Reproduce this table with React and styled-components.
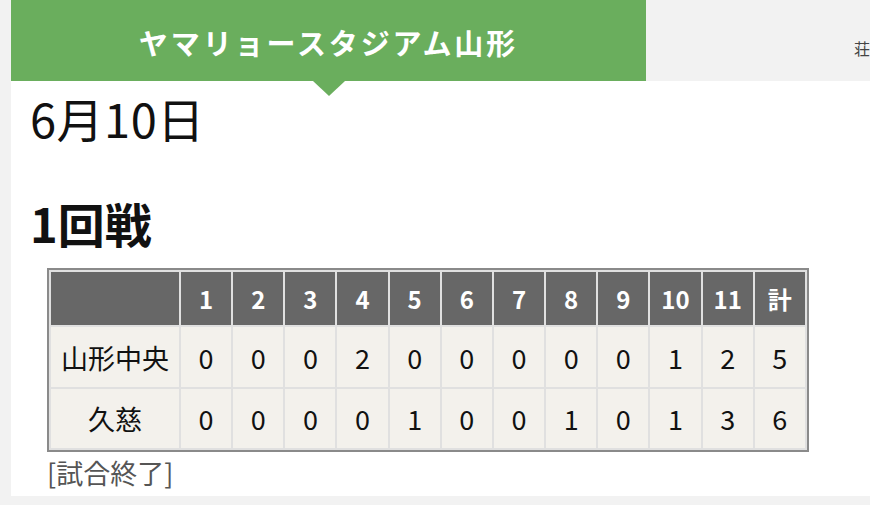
import React from 'react';
import styled, { createGlobalStyle } from 'styled-components';

const GlobalStyle = createGlobalStyle`
  html, body {
    margin: 0;
    padding: 0;
    background: #f2f2f2;
    overflow: hidden;
  }
  body {
    font-family: "Noto Sans CJK JP", "Noto Sans", sans-serif;
    color: #111;
  }
`;

const Page = styled.div`
  width: 1281px;
  padding-left: 11px;
`;

const TabBar = styled.div`
  display: flex;
  height: 81px;
`;

const Tab = styled.div`
  position: relative;
  flex: 0 0 635px;
  display: flex;
  align-items: center;
  justify-content: ${props => (props.active ? 'center' : 'flex-start')};
  padding-left: ${props => (props.active ? '0' : '208px')};
  background: ${props => (props.active ? '#6aae5d' : '#f2f2f2')};
  color: ${props => (props.active ? '#fff' : '#444')};
  font-size: ${props => (props.active ? '29px' : '16px')};
  font-weight: ${props => (props.active ? 700 : 400)};
  letter-spacing: ${props => (props.active ? '2.9px' : '1px')};
  padding-top: ${props => (props.active ? '2px' : '14px')};
  box-sizing: border-box;
  white-space: nowrap;

  ${props => props.active && `
    &:after {
      content: '';
      position: absolute;
      left: 50%;
      bottom: -15px;
      margin-left: -16px;
      border-left: 16px solid transparent;
      border-right: 16px solid transparent;
      border-top: 15px solid #6aae5d;
    }
  `}
`;

const Panel = styled.div`
  background: #fff;
  padding: 9px 0 4px 19px;
`;

const DateTitle = styled.div`
  font-size: 47px;
  font-weight: 400;
  line-height: 56px;
  letter-spacing: 0.5px;
`;

const RoundTitle = styled.h2`
  margin: 49px 0 0;
  font-size: 47px;
  font-weight: 700;
  line-height: 56px;
`;

const Score = styled.table`
  width: 762px;
  margin: 17px 0 0 17px;
  border: 2px solid #8a8a8a;
  border-collapse: separate;
  border-spacing: 2px;
  background: #e0e0e0;
  table-layout: fixed;
`;

const HeadCell = styled.th`
  background: #676767;
  color: #fff;
  font-size: 24px;
  font-weight: 700;
  height: 53px;
  padding: 0;
  width: ${props => (props.team ? '128px' : 'auto')};
  text-align: center;
`;

const Cell = styled.td`
  background: #f3f1ec;
  font-size: 27px;
  height: ${props => props.h}px;
  padding: 0;
  text-align: center;
  color: #111;
`;

const Status = styled.div`
  margin: 2px 0 0 17px;
  font-size: 27px;
  color: #555;
  line-height: 38px;
`;

const innings = ['1', '2', '3', '4', '5', '6', '7', '8', '9', '10', '11', '計'];

const rows = [
  { team: '山形中央', scores: [0, 0, 0, 2, 0, 0, 0, 0, 0, 1, 2, 5], h: 60 },
  { team: '久慈', scores: [0, 0, 0, 0, 1, 0, 0, 1, 0, 1, 3, 6], h: 59 },
];

export default function App() {
  return (
    <>
      <GlobalStyle />
      <Page>
        <TabBar>
          <Tab active>ヤマリョースタジアム山形</Tab>
          <Tab>荘内銀行・日新製薬スタジアムやまがた</Tab>
        </TabBar>
        <Panel>
          <DateTitle>6月10日</DateTitle>
          <RoundTitle>1回戦</RoundTitle>
          <Score>
            <thead>
              <tr>
                <HeadCell team />
                {innings.map(i => (
                  <HeadCell key={i}>{i}</HeadCell>
                ))}
              </tr>
            </thead>
            <tbody>
              {rows.map(r => (
                <tr key={r.team}>
                  <Cell h={r.h}>{r.team}</Cell>
                  {r.scores.map((s, idx) => (
                    <Cell key={idx} h={r.h}>{s}</Cell>
                  ))}
                </tr>
              ))}
            </tbody>
          </Score>
          <Status>[試合終了]</Status>
        </Panel>
      </Page>
    </>
  );
}
